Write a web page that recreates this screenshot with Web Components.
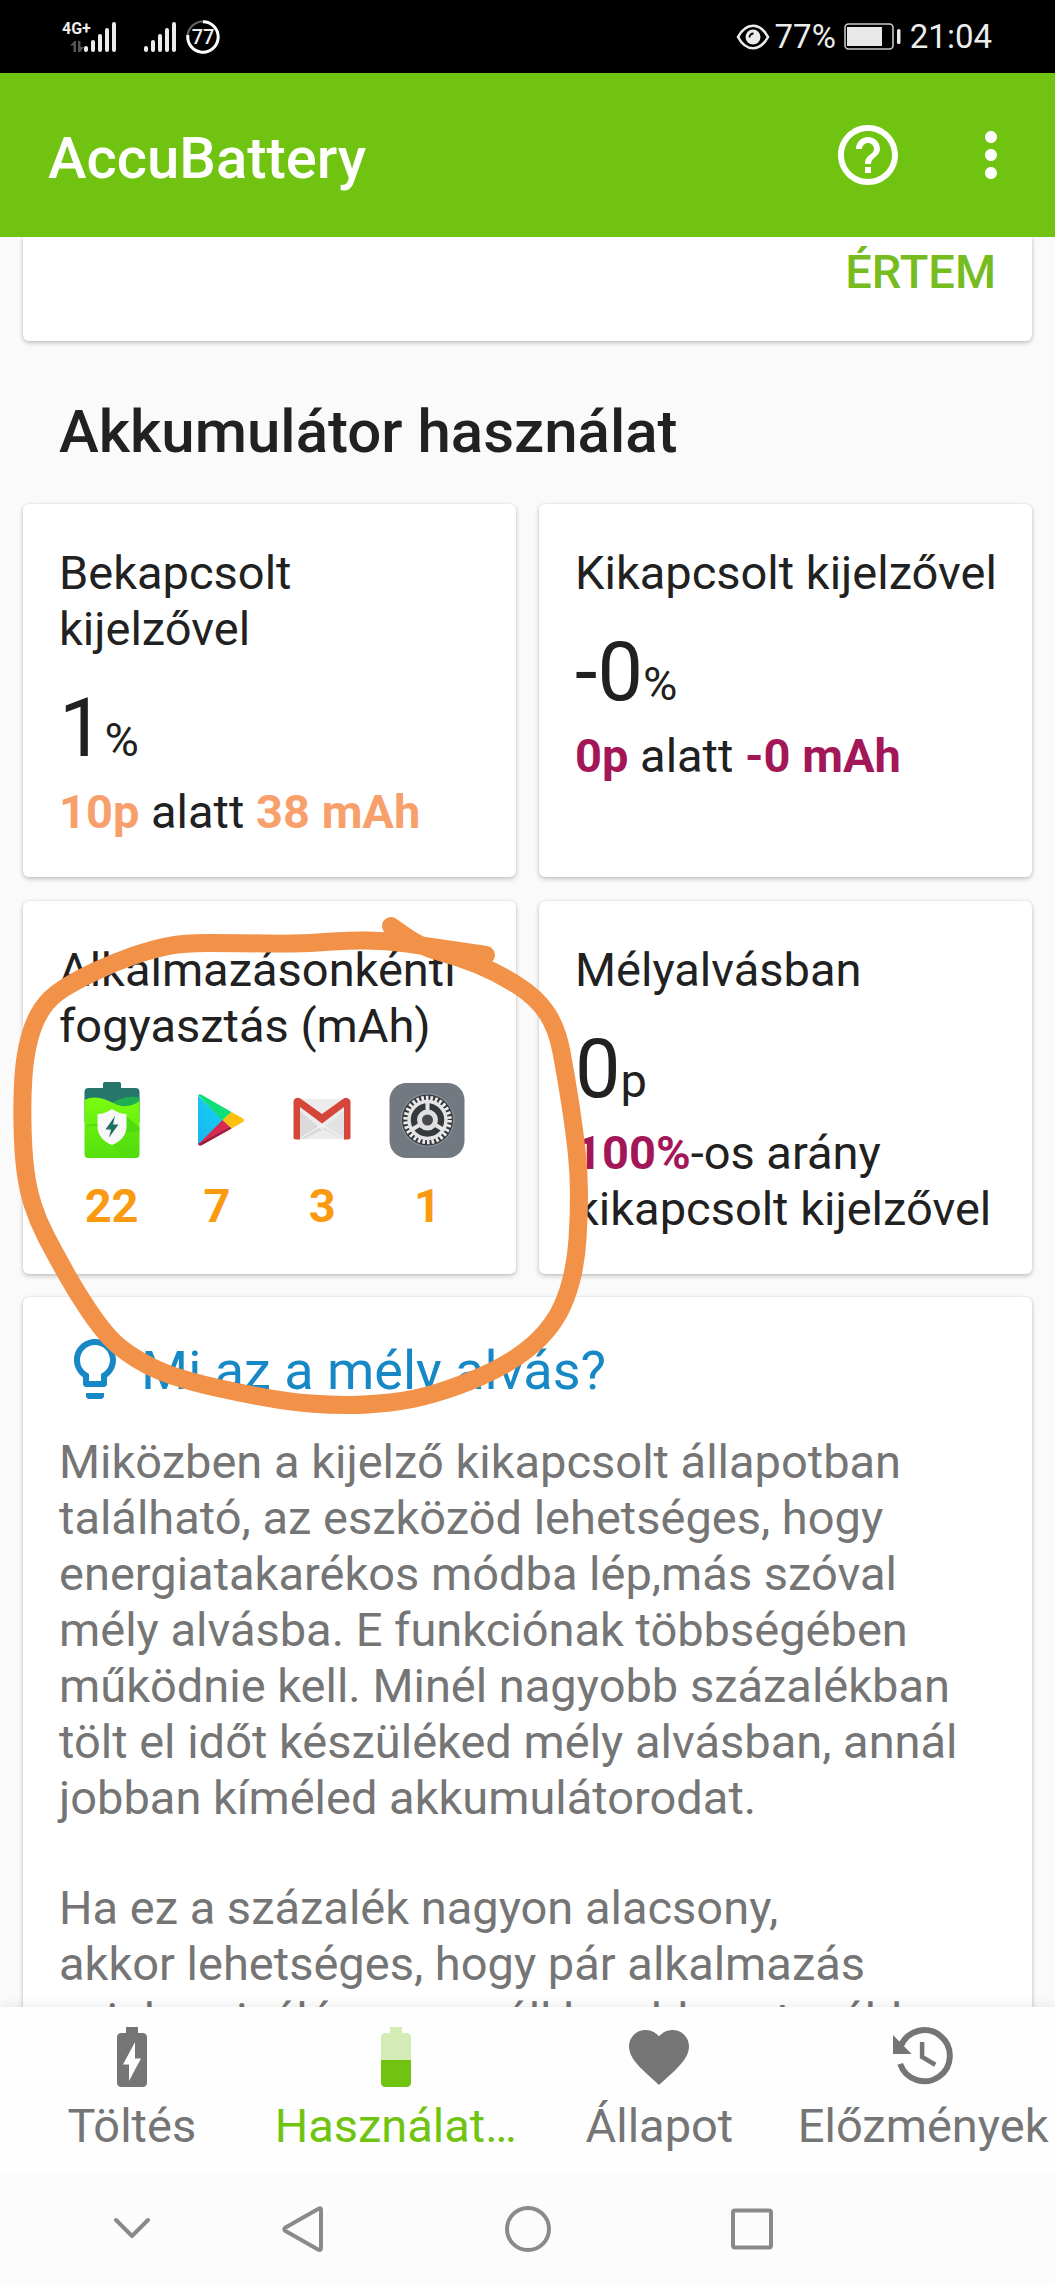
<!DOCTYPE html>
<html lang="hu">
<head>
<meta charset="utf-8">
<meta name="viewport" content="width=device-width, initial-scale=1">
<title>AccuBattery</title>
<style>
  html, body { margin: 0; height: 100%; }
  body { font-family: Roboto, "Noto Sans", sans-serif; font-size: 47px; line-height: 56px; color: #212121; background: #fafafa; }
</style>
</head>
<body>
<battery-app></battery-app>
<script>
const define = (tag, html, setup) => {
  const template = document.createElement('template');
  template.innerHTML = html;
  customElements.define(tag, class extends HTMLElement {
    constructor() {
      super();
      this.attachShadow({ mode: 'open' }).append(template.content.cloneNode(true));
    }
    connectedCallback() { if (setup) setup(this, this.shadowRoot); }
  });
};

/* Icon glyphs, keyed by name: [viewBox, markup] */
const ICONS = {
  help: ['0 0 24 24', '<path fill="currentColor" d="M11 18h2v-2h-2v2zm1-16C6.48 2 2 6.48 2 12s4.48 10 10 10 10-4.48 10-10S17.52 2 12 2zm0 18c-4.41 0-8-3.59-8-8s3.59-8 8-8 8 3.59 8 8-3.59 8-8 8zm0-14c-2.21 0-4 1.79-4 4h2c0-1.1.9-2 2-2s2 .9 2 2c0 2-3 1.75-3 5h2c0-2.25 3-2.5 3-5 0-2.21-1.79-4-4-4z"/>'],
  more: ['0 0 24 24', '<path fill="currentColor" d="M12 8c1.1 0 2-.9 2-2s-.9-2-2-2-2 .9-2 2 .9 2 2 2zm0 2c-1.1 0-2 .9-2 2s.9 2 2 2 2-.9 2-2-.9-2-2-2zm0 6c-1.1 0-2 .9-2 2s.9 2 2 2 2-.9 2-2-.9-2-2-2z"/>'],
  charging: ['0 0 24 24', '<path fill="currentColor" d="M15.67 4H14V2h-4v2H8.33C7.6 4 7 4.6 7 5.33v15.33C7 21.4 7.6 22 8.33 22h7.33c.74 0 1.34-.6 1.34-1.33V5.33C17 4.6 16.4 4 15.67 4zM11 20v-5.5H9L13 7v5.5h2L11 20z"/>'],
  half: ['0 0 24 24', '<path fill="currentColor" opacity=".3" d="M17 5.33C17 4.6 16.4 4 15.67 4H14V2h-4v2H8.33C7.6 4 7 4.6 7 5.33V13h10V5.33z"/><path fill="currentColor" d="M7 13v7.67C7 21.4 7.6 22 8.33 22h7.33c.74 0 1.34-.6 1.34-1.33V13H7z"/>'],
  heart: ['0 0 24 24', '<path fill="currentColor" d="M12 21.35l-1.45-1.32C5.4 15.36 2 12.28 2 8.5 2 5.42 4.42 3 7.5 3c1.74 0 3.41.81 4.5 2.09C13.09 3.81 14.76 3 16.5 3 19.58 3 22 5.42 22 8.5c0 3.78-3.4 6.86-8.55 11.54L12 21.35z"/>'],
  history: ['0 0 24 24', '<path fill="none" stroke="currentColor" stroke-width="2" d="M4.6 8.3A8.5 8.5 0 1 1 4.4 14.3"/><path fill="currentColor" d="M2 4.7V11h6.2z"/><path fill="none" stroke="currentColor" stroke-width="1.5" d="M11.7 7v5l4.4 2.6"/>'],
  bulb: ['0 0 24 24', '<path fill="currentColor" d="M9 21c0 .55.45 1 1 1h4c.55 0 1-.45 1-1v-1H9v1zm3-19C8.14 2 5 5.14 5 9c0 2.38 1.19 4.47 3 5.74V17c0 .55.45 1 1 1h6c.55 0 1-.45 1-1v-2.26c1.81-1.27 3-3.36 3-5.74 0-3.86-3.14-7-7-7zm2.85 11.1l-.85.6V16h-4v-2.3l-.85-.6A4.997 4.997 0 0 1 7 9c0-2.76 2.24-5 5-5s5 2.24 5 5c0 1.63-.8 3.16-2.15 4.1z"/>'],
  signal: ['0 0 33 30', '<g stroke="#ececec" stroke-width="4" stroke-linecap="round"><path d="M2 26v2M9 20v8M16 14v14M23 8v20M30 2v26"/></g>'],
  arrows: ['0 0 14 11', '<g fill="#555"><path d="M0 4.5 4.5 0H6v11H3.5V4.5zM8 0h2.5v6H14L10 11H8z"/></g>'],
  ring: ['0 0 34 34', '<circle cx="17" cy="17" r="15.5" fill="none" stroke="#666" stroke-width="2"/><path fill="none" stroke="#fff" stroke-width="3" d="M17 1.8A15.2 15.2 0 1 1 1.9 15"/>'],
  eye: ['0 0 34 26', '<path fill="none" stroke="#ececec" stroke-width="2.6" d="M2 13C10-2 24-2 32 13C24 28 10 28 2 13z"/><circle cx="17" cy="13" r="7.5" fill="#ececec"/><path fill="none" stroke="#000" stroke-width="1.8" d="M13.5 13.5a4 4 0 0 1 4-4"/>'],
  battery: ['0 0 57 27', '<rect x="1" y="1" width="48" height="25" rx="3.5" fill="none" stroke="#c8c8c8" stroke-width="1.6"/><rect x="3" y="4" width="35" height="19" fill="#e8e8e8"/><rect x="53" y="6" width="3.5" height="15" rx="1.5" fill="#e8e8e8"/>'],
  down: ['0 0 48 48', '<path fill="none" stroke="#8a8a8a" stroke-width="4" stroke-linecap="round" stroke-linejoin="round" d="M8 15 24 31 40 15"/>'],
  back: ['0 0 48 48', '<path fill="none" stroke="#8a8a8a" stroke-width="4" stroke-linejoin="round" d="M39 3.5Q41 2.5 41 5V43Q41 46 38 44.5L5.5 26Q3 24 5.5 22.5z"/>'],
  home: ['0 0 48 48', '<circle cx="24" cy="24" r="21" fill="none" stroke="#8a8a8a" stroke-width="4"/>'],
  recent: ['0 0 48 48', '<rect x="5" y="5.5" width="38" height="37" rx="2" fill="none" stroke="#8a8a8a" stroke-width="4"/>'],
  accu: ['0 0 76 76', '<defs><linearGradient id="a" x1="0" y1="0" x2="0" y2="1"><stop offset="0" stop-color="#7bfb10"/><stop offset="1" stop-color="#54e00e"/></linearGradient><clipPath id="c"><rect x="10.5" y="6" width="55" height="70" rx="4"/></clipPath></defs><path fill="#26776a" d="M29 1.5Q29 0 30.5 0H45.5Q47 0 47 1.5V10H29z"/><g clip-path="url(#c)"><path fill="#26776a" d="M10 6h56v34H10z"/><path fill="#1fae50" d="M36 22C46 16 56 13 66 16V30H36z"/><path fill="url(#a)" d="M10 18C24 11 36 20 44 23C52 26 60 23 66 19V76H10z"/><path fill="#49d911" d="M10 45Q20 39 30 44L48 31 66 46V49Q55 52 44 47Q28 42 10 45z" opacity=".8"/><path fill="#4cd411" d="M38 62 54 35 66 47V76H50z" opacity=".3"/></g><path fill="#f7f8f7" d="M38 27Q45 32 52.5 32V45Q52 57 38 63Q24 57 23.5 45V32Q31 32 38 27z"/><path fill="#1d7065" d="M41 34 31.5 47.5H37L35 55.5 44.5 42.5H39z"/>'],
  play: ['0 0 76 76', '<defs><linearGradient id="b" x1="1" y1="0" x2="0" y2="1"><stop offset="0" stop-color="#19d5f0"/><stop offset="1" stop-color="#16b4f5"/></linearGradient></defs><path fill="url(#b)" d="M19 13.5V63L44 38z"/><path fill="#10df78" d="M19 13Q20.5 11.5 23 13L52.5 30 43.5 38.5z"/><path fill="#fbc10d" d="M52.5 30 64 36.5Q66 38.3 64 40L52.5 46.5 43.5 38z"/><path fill="#d52c4d" d="M43.5 38 52.5 46.5 23 63Q20 64.5 19 62.5z"/><path fill="#972044" d="M19 61.5 22 63.5 52.5 46.5 51 45 21.5 61z"/>'],
  mail: ['0 0 76 76', '<path fill="#ececec" d="M12 17H64V57H12z"/><path fill="#dadada" d="M14 27 38 48 20 57H14z"/><path fill="#e2e2e2" d="M62 27 38 47 58 57H62z"/><path fill="none" stroke="#fafafa" stroke-width="1" d="M15 57 38 43 61 57"/><path fill="#d64539" d="M12 16Q15 15 17 17L38 32 59 17Q62 15 64 16.5Q66.5 17 66.5 20V55Q66.5 57.5 64 57.5H60V25L38 41.5 16 25V57.5H12Q9.5 57.5 9.5 55V20Q9.5 17 12 16z"/>'],
  gear: ['0 0 76 76', '<rect x=".5" y="1" width="75" height="75" rx="17" fill="#737981"/><circle cx="38.5" cy="38" r="27" fill="#858b93"/><circle cx="38.5" cy="38" r="25.5" fill="#35383d"/><circle cx="38.5" cy="38" r="22" fill="none" stroke="#eee" stroke-width="4.5" stroke-dasharray="2.6 2.007"/><circle cx="38.5" cy="38" r="18.5" fill="none" stroke="#e4e4e4" stroke-width="3.5"/><path stroke="#e4e4e4" stroke-width="4" d="M38.5 28V19M30.5 43 23 47.5M46.5 43 54 47.5"/><circle cx="38.5" cy="38" r="8" fill="#45484d" stroke="#dedede" stroke-width="5"/>']
};
define('app-icon', `<style>
  :host { display: block; flex: none; width: var(--w, 72px); height: var(--h, 72px); }
  svg { display: block; width: 100%; height: 100%; overflow: visible; }
</style><svg aria-hidden="true"></svg>`, (host, root) => {
  const icon = ICONS[host.getAttribute('name')];
  if (!icon) return;
  const svg = root.querySelector('svg');
  svg.setAttribute('viewBox', icon[0]);
  svg.innerHTML = icon[1];
});

define('status-bar', `<style>
  :host { display: flex; align-items: center; justify-content: space-between; height: 73px; flex: none; padding: 0 63px 0 62px; background: #000; color: #ececec; box-sizing: border-box; }
  div { display: flex; align-items: center; }
  .net { flex-direction: column; align-items: flex-end; gap: 4px; width: 22px; }
  .net span { font-size: 16px; line-height: 16px; font-weight: 700; align-self: flex-start; }
  .bars { --w: 33px; --h: 30px; }
  .second { margin: 0 9px 0 27px; }
  .level { display: grid; place-items: center; font-size: 20px; line-height: 24px; font-weight: 500; }
  .level > * { grid-area: 1 / 1; }
  .right { font-size: 33px; line-height: 40px; }
</style>
<div><div class="net"><span>4G+</span><app-icon name="arrows" style="--w:14px;--h:11px"></app-icon></div>
<app-icon class="bars" name="signal"></app-icon>
<app-icon class="bars second" name="signal"></app-icon>
<div class="level"><app-icon name="ring" style="--w:34px;--h:34px"></app-icon><span>77</span></div></div>
<div class="right"><app-icon name="eye" style="--w:34px;--h:26px;margin-right:5px"></app-icon><span>77%</span>
<app-icon name="battery" style="--w:57px;--h:27px;margin:0 9px 0 8px"></app-icon><span>21:04</span></div>`);

define('app-bar', `<style>
  :host { display: flex; align-items: center; height: 164px; flex: none; padding: 0 28px 0 48px; background: #70c411; color: #fff; box-sizing: border-box; }
  h1 { flex: 1; margin: 0; padding-top: 6px; font-size: 58px; line-height: 72px; font-weight: 500; }
  button { border: 0; padding: 0; background: none; color: inherit; }
  button + button { margin-left: 51px; }
</style>
<h1><slot></slot></h1>
<button type="button" aria-label="Súgó"><app-icon name="help"></app-icon></button>
<button type="button" aria-label="Menü"><app-icon name="more"></app-icon></button>`);

define('info-card', `<style>
  :host { display: block; box-sizing: border-box; padding: 41px 30px 37px 36px; background: #fff; border-radius: 6px; box-shadow: 0 2px 5px rgba(0,0,0,.22), 0 0 2px rgba(0,0,0,.1); }
  :host([tail]) { display: flex; justify-content: flex-end; padding: 7px 36px 41px; border-radius: 0 0 6px 6px; }
  :host([note]) { padding: 36px 36px 0; }
</style><slot></slot>`);

define('text-button', `<style>
  button { display: block; border: 0; padding: 0; background: none; color: #76bc21; font: inherit; font-weight: 500; }
</style><button type="button"><slot></slot></button>`);

define('stat-value', `<style>
  :host { display: block; }
  h3 { margin: 0; font: inherit; }
  .big { margin: 24px 0 7px; font-size: 81px; line-height: 96px; }
  .big ::slotted(small) { font-size: 47px; line-height: 1; }
</style><h3><slot name="label"></slot></h3><div class="big"><slot name="value"></slot><slot name="unit"></slot></div><slot></slot>`);

define('app-usage', `<style>
  :host { display: flex; flex-direction: column; align-items: center; gap: 20px; font-weight: 700; color: #f99a10; --w: 76px; --h: 76px; }
</style><slot name="icon"></slot><slot></slot>`);

/* Freehand loop drawn over the usage card */
const LOOP = [486,955,432,947,383,940,337,941,299,944,230,943,184,943,153,949,115,962,77,980,50,997,34,1021,25,1055,22,1097,23,1152,28,1190,38,1221,54,1252,77,1293,100,1327,119,1348,153,1369,191,1382,245,1394,291,1402,329,1405,367,1405,413,1400,459,1386,498,1369,528,1350,551,1327,566,1300,576,1262,579,1217,579,1172,574,1128,566,1076,557,1028,536,997,498,973,459,957,421,947,391,926];
define('ink-mark', `<style>
  :host { position: absolute; top: 0; left: 0; pointer-events: none; }
  svg { display: block; width: 600px; height: 1200px; }
</style><svg viewBox="0 237 600 1200" aria-hidden="true"><path fill="none" stroke="#f29148" stroke-width="18" stroke-linecap="round" stroke-linejoin="round"/></svg>`, (host, root) => {
  let d = `M${LOOP[0]} ${LOOP[1]}`;
  for (let i = 2; i < LOOP.length - 2; i += 2) {
    d += `Q${LOOP[i]} ${LOOP[i + 1]} ${(LOOP[i] + LOOP[i + 2]) / 2} ${(LOOP[i + 1] + LOOP[i + 3]) / 2}`;
  }
  root.querySelector('path').setAttribute('d', d + 'L391 926');
});

define('usage-page', `<style>
  :host { display: block; position: relative; flex: 1; min-height: 0; overflow: hidden; padding: 0 23px; background: #fafafa; }
  h2 { margin: 55px 36px 36px; font-size: 60px; line-height: 72px; font-weight: 500; }
  .grid { display: grid; grid-template-columns: 1fr 1fr; gap: 24px 23px; margin-bottom: 23px; }
  .warm { color: #f7a06c; }
  .cold { color: #a31657; }
  .usage { margin: 0; font: inherit; }
  .apps { display: grid; grid-template-columns: repeat(4, 1fr); margin: 28px 6px 0 0; }
  .tip { display: flex; align-items: center; gap: 10px; margin: 0 0 29px; font-size: 54px; line-height: 60px; font-weight: 400; color: #1788c6; }
  .tip span { padding-top: 4px; }
  p { margin: 0 0 54px; color: #757575; }
</style>
<info-card tail><text-button>ÉRTEM</text-button></info-card>
<h2>Akkumulátor használat</h2>
<div class="grid">
  <info-card><stat-value><span slot="label">Bekapcsolt kijelzővel</span><span slot="value">1</span><small slot="unit">%</small><b class="warm">10p</b> alatt <b class="warm">38 mAh</b></stat-value></info-card>
  <info-card><stat-value><span slot="label">Kikapcsolt kijelzővel</span><span slot="value">-0</span><small slot="unit">%</small><b class="cold">0p</b> alatt <b class="cold">-0 mAh</b></stat-value></info-card>
  <info-card><h3 class="usage">Alkalmazásonkénti fogyasztás (mAh)</h3>
    <div class="apps">
      <app-usage><app-icon slot="icon" name="accu"></app-icon>22</app-usage>
      <app-usage><app-icon slot="icon" name="play"></app-icon>7</app-usage>
      <app-usage><app-icon slot="icon" name="mail"></app-icon>3</app-usage>
      <app-usage><app-icon slot="icon" name="gear"></app-icon>1</app-usage>
    </div></info-card>
  <info-card><stat-value><span slot="label">Mélyalvásban</span><span slot="value">0</span><small slot="unit">p</small><b class="cold">100%</b>-os arány kikapcsolt kijelzővel</stat-value></info-card>
</div>
<info-card note>
  <h3 class="tip"><app-icon name="bulb"></app-icon><span>Mi az a mély alvás?</span></h3>
  <p>Miközben a kijelző kikapcsolt állapotban található, az eszközöd lehetséges, hogy energiatakarékos módba lép,más szóval mély alvásba. E funkciónak többségében működnie kell. Minél nagyobb százalékban tölt el időt készüléked mély alvásban, annál jobban kíméled akkumulátorodat.</p>
  <p>Ha ez a százalék nagyon alacsony,<br>akkor lehetséges, hogy pár alkalmazás<br>szinkronizálása vagy áll be ebben, tovább</p>
</info-card>
<ink-mark></ink-mark>`);

define('nav-tab', `<style>
  :host { display: block; min-width: 0; color: #757575; }
  :host([current]) { color: #70c411; }
  button { display: flex; flex-direction: column; align-items: center; gap: 5px; width: 100%; border: 0; padding: 14px 0 18px; background: none; color: inherit; font: inherit; white-space: nowrap; }
</style><button type="button"><slot name="icon"></slot><slot></slot></button>`);

define('bottom-nav', `<style>
  :host { display: grid; grid-template-columns: repeat(4, 1fr); flex: none; position: relative; background: #fefefe; box-shadow: 0 0 12px rgba(0,0,0,.1); }
</style>
<nav-tab><app-icon slot="icon" name="charging"></app-icon>Töltés</nav-tab>
<nav-tab current><app-icon slot="icon" name="half"></app-icon>Használat…</nav-tab>
<nav-tab><app-icon slot="icon" name="heart"></app-icon>Állapot</nav-tab>
<nav-tab><app-icon slot="icon" name="history"></app-icon>Előzmények</nav-tab>`);

define('system-nav', `<style>
  :host { display: grid; grid-template-columns: 1fr 224px 224px 224px 1fr; align-items: center; justify-items: center; flex: none; height: 114px; position: relative; background: #fcfcfc; --w: 48px; --h: 48px; }
  button { border: 0; padding: 0; background: none; }
  .hide { justify-self: end; padding: 0 36px; }
</style>
<button class="hide" type="button" aria-label="Elrejtés"><app-icon name="down"></app-icon></button>
<button type="button" aria-label="Vissza"><app-icon name="back"></app-icon></button>
<button type="button" aria-label="Kezdőlap"><app-icon name="home"></app-icon></button>
<button type="button" aria-label="Legutóbbiak"><app-icon name="recent"></app-icon></button>`);

define('battery-app', `<style>
  :host { display: flex; flex-direction: column; height: 100vh; }
</style>
<status-bar></status-bar>
<app-bar>AccuBattery</app-bar>
<usage-page></usage-page>
<bottom-nav></bottom-nav>
<system-nav></system-nav>`);
</script>
</body>
</html>
